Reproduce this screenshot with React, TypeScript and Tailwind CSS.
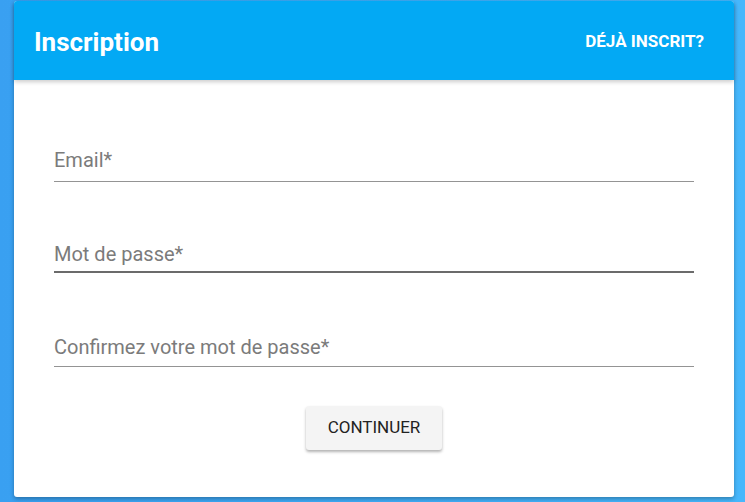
import React from "react";

const fields = [
  { label: "Email*", className: "mt-0 border-b border-[#949494] pb-[7px]" },
  { label: "Mot de passe*", className: "mt-[58px] border-b-2 border-[#6b6b6b] pb-[3px]" },
  { label: "Confirmez votre mot de passe*", className: "mt-[60px] border-b border-[#949494] pb-[5px]" },
];

export default function App() {
  return (
    <div
      className="min-h-[502px] w-full bg-gradient-to-r from-[#39a0f1] to-[#46b7fc] px-[14px] pt-[1px]"
      style={{ fontFamily: "Roboto, 'Liberation Sans', sans-serif" }}
    >
      <div className="w-[720px] rounded-[3px] bg-white shadow-[0_2px_4px_rgba(0,0,0,0.3)]">
        <header className="flex h-[79px] items-center justify-between rounded-t-[3px] bg-[#03a9f4] pl-5 pr-[30px] pt-[3px] shadow-[0_2px_4px_rgba(0,0,0,0.2)]">
          <h1 className="text-[26px] font-bold text-white">Inscription</h1>
          <button className="text-[17px] font-bold uppercase text-white">
            Déjà inscrit?
          </button>
        </header>
        <form className="px-10 pt-[66px] pb-[47px]" onSubmit={(e) => e.preventDefault()}>
          {fields.map((f) => (
            <div key={f.label} className={f.className}>
              <div className="h-[28px] text-[20px] leading-[28px] text-[#7b7b7b]">{f.label}</div>
            </div>
          ))}
          <div className="mt-[39px] flex justify-center">
            <button
              type="submit"
              className="h-[44px] w-[136px] rounded-[3px] bg-[#f4f4f4] text-[17px] font-normal text-[#222] shadow-[0_2px_3px_rgba(0,0,0,0.3)]"
            >
              CONTINUER
            </button>
          </div>
        </form>
      </div>
    </div>
  );
}
